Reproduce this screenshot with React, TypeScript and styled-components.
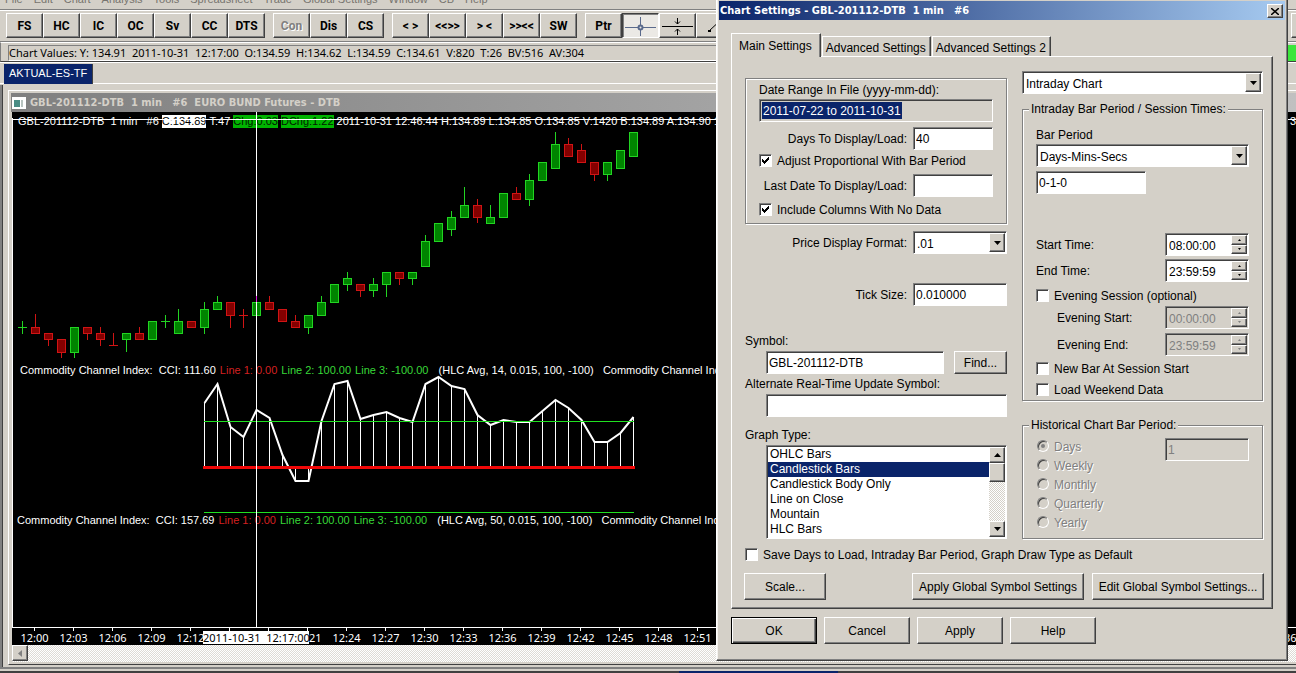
import React from "react";
import styled, { createGlobalStyle, css } from "styled-components";

const face = "#d4d0c8";
const shade = "#808080";
const dark = "#404040";
const navy = "#0a246a";
const uiFont = '"Liberation Sans", Arial, sans-serif';
const chartFont = '"Noto Sans", Tahoma, sans-serif';
const titleFont = '"DejaVu Sans Condensed", Tahoma, sans-serif';

const Global = createGlobalStyle`
  * { box-sizing: border-box; }
  body { margin: 0; background: ${face}; font: 12px/16px ${uiFont}; color: #000; overflow: hidden; }
  button, input, select { font: inherit; color: inherit; margin: 0; border-radius: 0; }
`;

const raised = css`
  background: ${face};
  border: 1px solid;
  border-color: #fff ${dark} ${dark} #fff;
  box-shadow: inset -1px -1px 0 ${shade};
`;

const sunken = css`
  border: 1px solid;
  border-color: ${shade} #fff #fff ${shade};
  box-shadow: inset 1px 1px 0 ${dark};
`;

const etched = css`
  border: 1px solid ${shade};
  box-shadow: 1px 1px 0 #fff, inset 1px 1px 0 #fff;
`;

/* ---------- Main window ---------- */

const Window = styled.div`
  position: relative;
  display: flex;
  flex-direction: column;
  height: 100vh;
  overflow: hidden;
  background: ${face};
`;

const MenuBar = styled.nav`
  display: flex;
  align-items: flex-end;
  gap: 11px;
  height: 10px;
  padding: 0 0 2px 5px;
  overflow: hidden;
  border-bottom: 1px solid ${shade};
  flex: none;
`;

const MenuItem = styled.a`
  color: #77746e;
  font: 11px/16px ${uiFont};
  text-decoration: none;
  white-space: nowrap;
`;

const Toolbar = styled.div`
  display: flex;
  gap: 8px;
  height: 32px;
  padding: 2px 0 0 6px;
  border-top: 1px solid #fff;
  border-bottom: 1px solid ${shade};
  flex: none;
`;

const ToolGroup = styled.div<{ $end?: boolean }>`
  display: flex;
  flex: none;
  ${(p) => p.$end && "margin: 0 -32px 0 auto;"}
`;

const ToolButton = styled.button<{ $pressed?: boolean }>`
  ${raised}
  display: flex;
  align-items: center;
  justify-content: center;
  width: 37px;
  height: 25px;
  padding: 0;
  font: bold 12px/16px Roboto, sans-serif;
  &:disabled {
    color: ${shade};
    text-shadow: 1px 1px 0 #fff;
  }
  ${(p) =>
    p.$pressed &&
    css`
      background: #ebe9e5;
      border-color: ${dark} #fff #fff ${dark};
      box-shadow: inset 1px 1px 0 ${shade};
    `}
`;

const StatusRow = styled.div`
  display: flex;
  justify-content: space-between;
  height: 20px;
  padding: 2px 0 0 7px;
  border-top: 1px solid #fff;
  border-bottom: 1px solid ${dark};
  border-left: 1px solid ${shade};
  flex: none;
`;

const StatusText = styled.output`
  flex: 1;
  height: 16px;
  border: 1px solid;
  border-color: ${shade} #fff #fff ${shade};
  font: 11px/14px ${chartFont};
  white-space: pre;
`;

const StatusLamp = styled.div`
  width: 60px;
  height: 16px;
  background: #3ce63c;
`;

const WorkTabs = styled.div`
  display: flex;
  height: 22px;
  padding: 1px 0 0 4px;
  border-bottom: 1px solid #fff;
  border-top: 1px solid #fff;
  flex: none;
`;

const WorkTab = styled.button`
  height: 20px;
  padding: 0 5px 3px 5px;
  border: 0;
  border-right: 1px solid ${dark};
  background: ${navy};
  color: #fff;
  font-size: 11px;
  line-height: 16px;
`;

const Desktop = styled.div`
  flex: 1;
  display: flex;
  min-height: 0;
  margin-top: 1px;
  border-left: 2px solid ${shade};
  border-bottom: 2px solid ${shade};
  box-shadow: inset 1px 0 0 ${dark};
  padding: 5px 0 2px 6px;
`;

const ChartWindow = styled.section`
  flex: 1;
  display: flex;
  flex-direction: column;
  min-width: 0;
  border-top: 1px solid #fff;
  border-left: 1px solid #fff;
  border-bottom: 1px solid ${dark};
  padding: 2px 0 2px 2px;
`;

const ChartTitle = styled.header`
  display: flex;
  align-items: center;
  gap: 4px;
  height: 19px;
  padding-left: 1px;
  background: linear-gradient(90deg, #808080, #c0c0c0);
  color: ${face};
  font: bold 11px/16px ${titleFont};
  white-space: pre;
  flex: none;
`;

const Plot = styled.div`
  position: relative;
  flex: 1;
  min-height: 0;
  overflow: hidden;
  margin-left: 1px;
  background: #000;
  color: #fff;
  font: 11px/14px ${uiFont};
  border-bottom: 1px solid #fff;
`;

const Drawing = styled.svg`
  position: absolute;
  inset: 0;
  width: 100%;
  height: 100%;
`;

const PlotLine = styled.div<{ $top: number; $left: number; $gap?: number }>`
  position: absolute;
  top: ${(p) => p.$top}px;
  left: ${(p) => p.$left}px;
  right: 0;
  display: flex;
  gap: ${(p) => p.$gap ?? 4}px;
  white-space: pre;
`;

const Ink = styled.span<{ $color?: string; $back?: string; $end?: boolean }>`
  color: ${(p) => p.$color ?? "#fff"};
  background: ${(p) => p.$back ?? "transparent"};
  height: 13px;
  line-height: 13px;
  flex: none;
  ${(p) => p.$end && "margin-left: auto;"}
`;

const Axis = styled.div`
  position: relative;
  display: flex;
  height: 17px;
  margin-left: 1px;
  padding-left: 3px;
  overflow: hidden;
  background: #000;
  color: #fff;
  font: 11px/13px ${chartFont};
  flex: none;
`;

const AxisLabel = styled.span`
  display: flex;
  flex-direction: column;
  align-items: center;
  width: 39px;
  flex: none;
  &::before {
    content: "";
    width: 1px;
    height: 3px;
    background: #fff;
  }
`;

const CursorTime = styled.span`
  position: absolute;
  left: 191px;
  top: 3px;
  width: 106px;
  text-align: center;
  background: #fff;
  color: #000;
  white-space: pre;
`;

const HScroll = styled.div`
  height: 17px;
  margin-left: 1px;
  background: repeating-conic-gradient(#fff 0 25%, #dedbd5 0 50%) 0 0 / 2px 2px;
  flex: none;
`;

const ScrollButton = styled.button`
  ${raised}
  display: flex;
  align-items: center;
  justify-content: center;
  width: 16px;
  height: 16px;
  padding: 0;
`;

const BottomStrip = styled.div`
  height: 4px;
  flex: none;
  border-bottom: 2px solid ${dark};
  background: ${face};
  display: flex;
  align-items: flex-end;
`;

const BottomTab = styled.div`
  height: 2px;
  width: 159px;
  margin: 0 0 -2px 679px;
  background: ${navy};
`;

/* ---------- Dialog ---------- */

const Dialog = styled.form`
  position: absolute;
  top: 0;
  right: 8px;
  width: 572px;
  background: ${face};
  border-left: 1px solid #fff;
  border-right: 1px solid ${dark};
  border-bottom: 1px solid ${dark};
  box-shadow: inset -1px -1px 0 ${shade}, inset 1px 0 0 #f4f2ee;
  padding: 1px 2px 16px;
`;

const DialogTitle = styled.header`
  display: flex;
  align-items: center;
  justify-content: space-between;
  height: 19px;
  padding: 1px 2px 0 1px;
  background: linear-gradient(90deg, ${navy}, #a6caf0);
  color: #fff;
  font: bold 11px/16px ${titleFont};
  white-space: pre;
`;

const CloseButton = styled.button`
  ${raised}
  display: flex;
  align-items: center;
  justify-content: center;
  width: 16px;
  height: 14px;
  padding: 0;
`;

const Tabs = styled.div`
  display: flex;
  align-items: flex-end;
  margin: 13px 12px 0;
`;

const Tab = styled.button<{ $active?: boolean }>`
  position: relative;
  height: 20px;
  padding: 2px 4px 0 3px;
  background: ${face};
  border: 1px solid;
  border-color: #fff ${dark} transparent #fff;
  border-bottom: 0;
  box-shadow: inset -1px 0 0 ${shade};
  margin-right: 1px;
  white-space: nowrap;
  ${(p) =>
    p.$active &&
    css`
      height: 24px;
      margin-bottom: -1px;
      padding: 0 8px 0 7px;
      z-index: 1;
    `}
`;

const Panel = styled.div`
  margin: 0 12px;
  padding: 14px 9px 8px 13px;
  border: 1px solid;
  border-color: #fff ${dark} ${dark} #fff;
  box-shadow: inset -1px -1px 0 ${shade};
`;

const Columns = styled.div`
  display: grid;
  grid-template-columns: 262px 1fr;
  gap: 15px;
`;

const Column = styled.div<{ $mt?: number }>`
  display: flex;
  flex-direction: column;
  padding-top: ${(p) => p.$mt ?? 0}px;
`;

const Group = styled.div`
  ${etched}
  display: flex;
  flex-direction: column;
  padding: 3px 13px 5px;
`;

const FieldSet = styled.fieldset<{ $mt: number }>`
  ${etched}
  min-width: 0;
  margin: ${(p) => p.$mt}px 0 0;
  padding: 0 13px 2px;
`;

const Legend = styled.legend`
  margin-left: -7px;
  padding: 0 2px;
  background: ${face};
  height: 16px;
`;

const Caption = styled.label<{ $mt?: number }>`
  display: block;
  height: 16px;
  margin-top: ${(p) => p.$mt ?? 0}px;
  white-space: nowrap;
`;

const Row = styled.div<{ $mt: number; $spread?: boolean; $indent?: number }>`
  display: flex;
  align-items: center;
  justify-content: ${(p) => (p.$spread ? "space-between" : "flex-end")};
  gap: 6px;
  margin-top: ${(p) => p.$mt}px;
  padding-left: ${(p) => p.$indent ?? 0}px;
  white-space: nowrap;
`;

const Field = styled.input<{ $w?: number }>`
  ${sunken}
  width: ${(p) => (p.$w ? `${p.$w}px` : "100%")};
  height: 23px;
  padding: 0 2px;
  background: #fff;
  outline: 0;
  &:disabled {
    background: ${face};
    color: ${shade};
  }
`;

const RangeBox = styled.div`
  ${sunken}
  height: 23px;
  margin-top: 1px;
  padding: 2px;
`;

const RangeValue = styled.output`
  display: inline-block;
  height: 17px;
  padding: 0 1px;
  line-height: 18px;
  background: ${navy};
  color: #fff;
`;

const ComboBox = styled.div<{ $w?: number; $mt?: number }>`
  ${sunken}
  display: flex;
  width: ${(p) => (p.$w ? `${p.$w}px` : "100%")};
  height: 23px;
  margin-top: ${(p) => p.$mt ?? 0}px;
  padding: 1px;
  background: #fff;
`;

const ComboSelect = styled.select`
  appearance: none;
  flex: 1;
  min-width: 0;
  border: 0;
  padding: 2px 0 0 2px;
  background: transparent;
  outline: 0;
`;

const DropArrow = styled.span`
  ${raised}
  display: flex;
  align-items: center;
  justify-content: center;
  width: 16px;
  height: 19px;
  flex: none;
`;

const SpinBox = styled.div<{ $off?: boolean }>`
  ${sunken}
  display: flex;
  width: 84px;
  height: 23px;
  padding: 1px;
  background: ${(p) => (p.$off ? face : "#fff")};
`;

const SpinInput = styled.input`
  flex: 1;
  min-width: 0;
  border: 0;
  padding: 2px 0 0 2px;
  background: transparent;
  outline: 0;
  &:disabled {
    color: ${shade};
  }
`;

const SpinButtons = styled.span`
  display: flex;
  flex-direction: column;
  width: 16px;
`;

const SpinButton = styled.button`
  ${raised}
  display: flex;
  align-items: center;
  justify-content: center;
  flex: 1;
  padding: 0;
`;

const Option = styled.label<{ $mt?: number; $off?: boolean }>`
  display: flex;
  align-items: center;
  gap: 5px;
  height: 16px;
  margin-top: ${(p) => p.$mt ?? 0}px;
  white-space: nowrap;
  ${(p) => p.$off && `color: ${shade}; text-shadow: 1px 1px 0 #fff;`}
`;

const Mark = styled.span`
  display: grid;
  place-items: center;
  width: 13px;
  height: 13px;
  margin-bottom: 2px;
  flex: none;
  & > * {
    grid-area: 1 / 1;
  }
  & > svg {
    pointer-events: none;
  }
`;

const Tick = styled.input`
  ${sunken}
  appearance: none;
  width: 13px;
  height: 13px;
  background: #fff;
`;

const Radio = styled.input`
  appearance: none;
  width: 12px;
  height: 12px;
  border-radius: 50%;
  border: 1px solid;
  border-color: ${shade} #fff #fff ${shade};
  box-shadow: inset 1px 1px 0 ${dark};
`;

const HistoryGrid = styled.div`
  display: flex;
  justify-content: space-between;
  align-items: flex-start;
  padding: 5px 0;
`;

const RadioList = styled.div`
  display: flex;
  flex-direction: column;
  gap: 3px;
  padding-top: 1px;
`;

const ListBox = styled.div`
  ${sunken}
  display: flex;
  height: 94px;
  margin: 2px 0 0 21px;
  padding: 1px;
  background: #fff;
`;

const ListSelect = styled.select`
  flex: 1;
  height: 90px;
  padding: 0;
  border: 0;
  outline: 0;
  overflow: hidden;
  scrollbar-width: none;
  background: #fff;
  & option {
    height: 15px;
    min-height: 15px;
    padding: 0 2px;
    line-height: 16px;
    color: #000;
  }
  & option:checked {
    color: #fff;
    background: ${navy} linear-gradient(${navy}, ${navy});
  }
`;

const VScroll = styled.div`
  display: flex;
  flex-direction: column;
  width: 16px;
  background: repeating-conic-gradient(#fff 0 25%, ${face} 0 50%) 0 0 / 2px 2px;
`;

const ScrollThumb = styled.div`
  ${raised}
  height: 19px;
  margin-bottom: auto;
`;

const PushButton = styled.button<{ $w: number; $h?: number; $default?: boolean; $start?: boolean }>`
  ${raised}
  width: ${(p) => p.$w}px;
  height: ${(p) => p.$h ?? 27}px;
  padding: 1px 0 0;
  white-space: nowrap;
  flex: none;
  ${(p) => p.$start && "margin-right: auto;"}
  ${(p) =>
    p.$default &&
    css`
      border-color: #000;
      box-shadow: inset 1px 1px 0 #fff, inset -1px -1px 0 ${dark}, inset -2px -2px 0 ${shade};
    `}
`;

const PanelButtons = styled.div`
  display: flex;
  gap: 8px;
  margin: 10px -1px 0 -1px;
`;

const Footer = styled.footer`
  display: flex;
  gap: 7px;
  margin: 8px 12px 0;
`;

/* ---------- Small glyphs ---------- */

const Arrow = ({ dir, size = 4, color = "#000" }: { dir: "up" | "down" | "left"; size?: number; color?: string }) => {
  const w = size * 2 - 1;
  const shapes = {
    down: `M0 0H${w}L${size - 0.5} ${size}Z`,
    up: `M0 ${size}H${w}L${size - 0.5} 0Z`,
    left: `M${size} 0V${w}L0 ${size - 0.5}Z`,
  };
  return (
    <svg width={dir === "left" ? size : w} height={dir === "left" ? w : size} aria-hidden="true">
      <path d={shapes[dir]} fill={color} />
    </svg>
  );
};

const CheckGlyph = () => (
  <svg width="7" height="7" viewBox="0 0 7 7" shapeRendering="crispEdges" aria-hidden="true">
    <path d="M0 2h1v1h1v1h1v-1h1v-1h1v-1h1v-1h1v3h-1v1h-1v1h-1v1h-1v1h-1v-1h-1v-1h-1z" />
  </svg>
);

const CrossIcon = () => (
  <svg width="31" height="20" fill="none" stroke="#5a6a8c" aria-hidden="true">
    <path d="M0 11.5H13M18 11.5H31M15.500 1V9M15.500 14V20" />
    <circle cx="15.500" cy="11.500" r="2" strokeWidth="2" />
  </svg>
);

const SplitIcon = () => (
  <svg width="31" height="20" fill="none" stroke="#000" aria-hidden="true">
    <path d="M0 10.500H31M15.500 2V8M13 5.500L15.500 8L18 5.500M15.500 13V19M13 15.500L15.500 13L18 15.500" />
  </svg>
);

const LineIcon = () => (
  <svg width="24" height="20" fill="none" stroke="#000" aria-hidden="true">
    <path d="M6 15L20 2" />
    <path d="M5 14h3v2h-3z" fill="#000" stroke="none" />
  </svg>
);

/* ---------- Chart data: [high, top, bottom, low, rising] ---------- */

type Candle = [number, number, number, number, 0 | 1];

const candles: Candle[] = [
  [321, 327, 327, 333, 1], [314, 327, 333, 333, 0], [333, 333, 339, 345, 0], [339, 339, 352, 357, 0],
  [327, 327, 352, 357, 1], [327, 327, 333, 339, 0], [327, 333, 339, 345, 0], [333, 345, 345, 345, 0],
  [333, 333, 339, 351, 1], [327, 333, 339, 339, 0], [321, 321, 339, 339, 1], [315, 321, 321, 327, 1],
  [309, 321, 333, 333, 1], [321, 321, 327, 327, 0], [302, 309, 327, 333, 1], [296, 302, 309, 309, 1],
  [302, 302, 315, 327, 0], [309, 315, 315, 327, 0], [302, 302, 315, 315, 1], [296, 302, 309, 309, 0],
  [309, 309, 321, 321, 0], [315, 321, 327, 327, 0], [315, 315, 327, 333, 1], [296, 302, 315, 315, 1],
  [284, 284, 302, 302, 1], [272, 278, 284, 290, 1], [284, 284, 290, 296, 0], [278, 284, 290, 296, 1],
  [272, 272, 284, 296, 1], [272, 272, 278, 284, 0], [272, 272, 278, 284, 1], [235, 241, 266, 266, 1],
  [223, 223, 241, 241, 1], [211, 217, 229, 235, 1], [187, 205, 217, 217, 1], [199, 205, 217, 222, 0],
  [205, 217, 223, 223, 1], [193, 193, 217, 217, 1], [187, 193, 199, 199, 0], [174, 180, 199, 205, 1],
  [162, 162, 180, 180, 1], [132, 144, 168, 168, 1], [138, 144, 156, 156, 0], [144, 150, 162, 162, 0],
  [162, 162, 174, 180, 0], [162, 162, 174, 180, 1], [150, 150, 168, 168, 1], [132, 132, 156, 156, 1],
];

const cci = [
  403, 384, 427, 437, 410, 418, 455, 481, 481, 421, 384, 381, 419, 415, 412, 418, 422, 384, 377, 386, 389, 415, 425,
  420, 422, 422, 411, 400, 408, 420, 442, 442, 433, 417,
];

const axisTimes = Array.from({ length: 33 }, (_, i) => {
  const minutes = 720 + i * 3;
  return `${Math.floor(minutes / 60)}:${String(minutes % 60).padStart(2, "0")}`;
});

const ChartDrawing = () => (
  <Drawing aria-hidden="true">
    <g transform="translate(-12 -112)" shapeRendering="crispEdges">
      {candles.map(([hi, top, bottom, lo, up], i) => {
        const x = 22 + i * 13;
        const line = up ? "#22d422" : "#d01414";
        return (
          <g key={i} stroke={line} fill={up ? "#008400" : "#840000"}>
            <path d={`M${x + 0.5} ${hi}V${lo + 1}`} />
            {top === bottom ? (
              <path d={`M${x - 4} ${top + 0.5}H${x + 5}`} />
            ) : (
              <rect x={x - 3.5} y={top + 0.5} width="8" height={bottom - top} />
            )}
          </g>
        );
      })}
      {cci.map((y, i) => (
        <path key={i} d={`M${204.5 + i * 13} ${y}V467`} stroke="#fff" />
      ))}
      <polyline
        points={cci.map((y, i) => `${204.5 + i * 13},${y}`).join(" ")}
        fill="none"
        stroke="#fff"
        strokeWidth="2"
        shapeRendering="auto"
      />
      <rect x="204" y="421" width="430" height="1" fill="#20e020" />
      <rect x="204" y="512" width="430" height="1" fill="#20e020" />
      <path d="M203 467.500H635" stroke="#f00808" strokeWidth="3" />
      <path d="M256.500 112V628M12.500 118V628M12 119.500H3000" stroke="#fff" />
      <path d="M256.500 296V302" stroke="#e020e0" />
    </g>
  </Drawing>
);

const CciLine = ({ top, left, value, period }: { top: number; left: number; value: string; period: number }) => (
  <PlotLine $top={top} $left={left}>
    <Ink>{`Commodity Channel Index:  CCI: ${value}`}</Ink>
    <Ink $color="#d42020">Line 1: 0.00</Ink>
    <Ink $color="#38d838">Line 2: 100.00</Ink>
    <Ink $color="#38d838">Line 3: -100.00</Ink>
    <Ink>{`  (HLC Avg, ${period}, 0.015, 100, -100)   Commodity Channel Index:`}</Ink>
  </PlotLine>
);

const Check = ({ label, checked, mt }: { label: string; checked?: boolean; mt: number }) => (
  <Option $mt={mt}>
    <Mark>
      <Tick type="checkbox" defaultChecked={checked} />
      {checked && <CheckGlyph />}
    </Mark>
    {label}
  </Option>
);

const Combo = ({ id, label, options, w, mt }: { id: string; label?: string; options: string[]; w?: number; mt?: number }) => (
  <ComboBox $w={w} $mt={mt}>
    <ComboSelect id={id} aria-label={label}>
      {options.map((o) => (
        <option key={o}>{o}</option>
      ))}
    </ComboSelect>
    <DropArrow>
      <Arrow dir="down" />
    </DropArrow>
  </ComboBox>
);

const TimeRow = ({ id, label, value, mt, off, indent }: { id: string; label: string; value: string; mt: number; off?: boolean; indent?: number }) => (
  <Row $mt={mt} $spread $indent={indent}>
    <label htmlFor={id}>{label}</label>
    <SpinBox $off={off}>
      <SpinInput id={id} defaultValue={value} disabled={off} />
      <SpinButtons>
        <SpinButton type="button" disabled={off} aria-label={`${label} later`}>
          <Arrow dir="up" size={2} color={off ? shade : "#000"} />
        </SpinButton>
        <SpinButton type="button" disabled={off} aria-label={`${label} earlier`}>
          <Arrow dir="down" size={2} color={off ? shade : "#000"} />
        </SpinButton>
      </SpinButtons>
    </SpinBox>
  </Row>
);

const menus = ["File", "Edit", "Chart", "Analysis", "Tools", "Spreadsheet", "Trade", "Global Settings", "Window", "CB", "Help"];
const toolGroups = [
  ["FS", "HC", "IC", "OC", "Sv", "CC", "DTS"],
  ["Con", "Dis", "CS"],
  ["< >", "<<>>", "> <", ">><<", "SW"],
];
const graphTypes = ["OHLC Bars", "Candlestick Bars", "Candlestick Body Only", "Line on Close", "Mountain", "HLC Bars"];
const periods = ["Days", "Weekly", "Monthly", "Quarterly", "Yearly"];

const MainWindow = () => (
  <>
    <MenuBar>
      {menus.map((m) => (
        <MenuItem key={m} href="#">{m}</MenuItem>
      ))}
    </MenuBar>
    <Toolbar>
      {toolGroups.map((group) => (
        <ToolGroup key={group[0]}>
          {group.map((t) => (
            <ToolButton key={t} disabled={t === "Con"}>{t}</ToolButton>
          ))}
        </ToolGroup>
      ))}
      <ToolGroup>
        <ToolButton>Ptr</ToolButton>
        <ToolButton $pressed aria-label="Crosshair"><CrossIcon /></ToolButton>
        <ToolButton aria-label="Horizontal split"><SplitIcon /></ToolButton>
        <ToolButton aria-label="Line"><LineIcon /></ToolButton>
      </ToolGroup>
      <ToolGroup $end>
        <ToolButton aria-label="More tools" />
      </ToolGroup>
    </Toolbar>
    <StatusRow>
      <StatusText>
        {"Chart Values: Y: 134.91  2011-10-31  12:17:00  O:134.59  H:134.62  L:134.59  C:134.61  V:820  T:26  BV:516  AV:304"}
      </StatusText>
      <StatusLamp />
    </StatusRow>
    <WorkTabs>
      <WorkTab>AKTUAL-ES-TF</WorkTab>
    </WorkTabs>
    <Desktop>
      <ChartWindow>
        <ChartTitle>
          <svg width="14" height="12" aria-hidden="true">
            <path d="M0 0H14V12H0Z" fill="#fff" />
            <path d="M2 3H8V10H2Z" fill="#4a8c84" />
            <path d="M9 3H11V10H9Z" fill="#b8c4c0" />
          </svg>
          {"GBL-201112-DTB  1 min   #6  EURO BUND Futures - DTB"}
        </ChartTitle>
        <Plot>
          <PlotLine $top={3} $left={6} $gap={3}>
            <Ink>{"GBL-201112-DTB  1 min   #6"}</Ink>
            <Ink $color="#000" $back="#fff">C:134.89</Ink>
            <Ink>T:47</Ink>
            <Ink $color="#002000" $back="#00b400">Chg:0.03</Ink>
            <Ink $color="#002000" $back="#00b400">DChg:1.22</Ink>
            <Ink>2011-10-31 12:46:44 H:134.89 L:134.85 O:134.85 V:1420 B:134.89 A:134.90 1</Ink>
            <Ink $end>3</Ink>
          </PlotLine>
          <CciLine top={252} left={8} value="111.60" period={14} />
          <CciLine top={402} left={5} value="157.69" period={50} />
          <ChartDrawing />
        </Plot>
        <Axis>
          {axisTimes.map((t) => (
            <AxisLabel key={t}>{t}</AxisLabel>
          ))}
          <CursorTime>{"2011-10-31  12:17:00"}</CursorTime>
        </Axis>
        <HScroll>
          <ScrollButton aria-label="Scroll left"><Arrow dir="left" color={shade} /></ScrollButton>
        </HScroll>
      </ChartWindow>
    </Desktop>
    <BottomStrip>
      <BottomTab />
    </BottomStrip>
  </>
);

const SettingsDialog = () => (
  <Dialog aria-label="Chart Settings" onSubmit={(e) => e.preventDefault()}>
    <DialogTitle>
      {"Chart Settings - GBL-201112-DTB  1 min   #6"}
      <CloseButton type="button" aria-label="Close">
        <svg width="8" height="7" stroke="#000" strokeWidth="1.5" aria-hidden="true">
          <path d="M0 0L8 7M8 0L0 7" />
        </svg>
      </CloseButton>
    </DialogTitle>
    <Tabs>
      <Tab type="button" $active>Main Settings</Tab>
      <Tab type="button">Advanced Settings</Tab>
      <Tab type="button">Advanced Settings 2</Tab>
    </Tabs>
    <Panel>
      <Columns>
        <Column $mt={7}>
          <Group>
            <Caption htmlFor="range">Date Range In File (yyyy-mm-dd):</Caption>
            <RangeBox><RangeValue id="range">2011-07-22 to 2011-10-31</RangeValue></RangeBox>
            <Row $mt={5}>
              <label htmlFor="days">Days To Display/Load:</label>
              <Field id="days" $w={80} defaultValue="40" />
            </Row>
            <Check mt={3} checked label="Adjust Proportional With Bar Period" />
            <Row $mt={5}>
              <label htmlFor="last">Last Date To Display/Load:</label>
              <Field id="last" $w={80} />
            </Row>
            <Check mt={5} checked label="Include Columns With No Data" />
          </Group>
          <Row $mt={7}>
            <label htmlFor="format">Price Display Format:</label>
            <Combo id="format" w={94} options={[".01"]} />
          </Row>
          <Row $mt={29}>
            <label htmlFor="tick">Tick Size:</label>
            <Field id="tick" $w={94} defaultValue="0.010000" />
          </Row>
          <Caption htmlFor="symbol" $mt={27}>Symbol:</Caption>
          <Row $mt={2} $indent={21} $spread>
            <Field id="symbol" $w={178} defaultValue="GBL-201112-DTB" />
            <PushButton type="button" $w={53} $h={23}>Find...</PushButton>
          </Row>
          <Caption htmlFor="alt" $mt={2}>Alternate Real-Time Update Symbol:</Caption>
          <Row $mt={2} $indent={21}>
            <Field id="alt" />
          </Row>
          <Caption htmlFor="graph" $mt={10}>Graph Type:</Caption>
          <ListBox>
            <ListSelect id="graph" size={6} defaultValue="Candlestick Bars">
              {graphTypes.map((g) => (
                <option key={g}>{g}</option>
              ))}
            </ListSelect>
            <VScroll>
              <ScrollButton type="button" aria-label="Scroll up"><Arrow dir="up" /></ScrollButton>
              <ScrollThumb />
              <ScrollButton type="button" aria-label="Scroll down"><Arrow dir="down" /></ScrollButton>
            </VScroll>
          </ListBox>
        </Column>
        <Column>
          <Combo id="kind" label="Chart kind" options={["Intraday Chart"]} />
          <FieldSet $mt={7}>
            <Legend>Intraday Bar Period / Session Times:</Legend>
            <Caption htmlFor="period" $mt={10}>Bar Period</Caption>
            <Combo id="period" w={213} mt={1} options={["Days-Mins-Secs"]} />
            <Row $mt={4} $spread>
              <Field $w={110} defaultValue="0-1-0" aria-label="Bar period value" />
            </Row>
            <TimeRow id="start" label="Start Time:" value="08:00:00" mt={39} />
            <TimeRow id="end" label="End Time:" value="23:59:59" mt={3} />
            <Check mt={6} label="Evening Session (optional)" />
            <TimeRow id="evestart" label="Evening Start:" value="00:00:00" mt={2} off indent={21} />
            <TimeRow id="eveend" label="Evening End:" value="23:59:59" mt={4} off indent={21} />
            <Check mt={5} label="New Bar At Session Start" />
            <Check mt={5} label="Load Weekend Data" />
          </FieldSet>
          <FieldSet $mt={16}>
            <Legend>Historical Chart Bar Period:</Legend>
            <HistoryGrid>
              <RadioList>
                {periods.map((p, i) => (
                  <Option key={p} $off>
                    <Mark>
                      <Radio type="radio" name="history" disabled defaultChecked={i === 0} />
                      {i === 0 && (
                        <svg width="4" height="4" aria-hidden="true"><circle cx="2" cy="2" r="2" fill={shade} /></svg>
                      )}
                    </Mark>
                    {p}
                  </Option>
                ))}
              </RadioList>
              <Field $w={84} defaultValue="1" disabled aria-label="Historical period count" />
            </HistoryGrid>
          </FieldSet>
        </Column>
      </Columns>
      <Check mt={8} label="Save Days to Load, Intraday Bar Period, Graph Draw Type as Default" />
      <PanelButtons>
        <PushButton type="button" $w={82} $start>Scale...</PushButton>
        <PushButton type="button" $w={172}>Apply Global Symbol Settings</PushButton>
        <PushButton type="button" $w={172}>Edit Global Symbol Settings...</PushButton>
      </PanelButtons>
    </Panel>
    <Footer>
      <PushButton type="submit" $w={86} $default>OK</PushButton>
      <PushButton type="button" $w={86}>Cancel</PushButton>
      <PushButton type="button" $w={86}>Apply</PushButton>
      <PushButton type="button" $w={86}>Help</PushButton>
    </Footer>
  </Dialog>
);

export default function App() {
  return (
    <>
      <Global />
      <Window>
        <MainWindow />
        <SettingsDialog />
      </Window>
    </>
  );
}
